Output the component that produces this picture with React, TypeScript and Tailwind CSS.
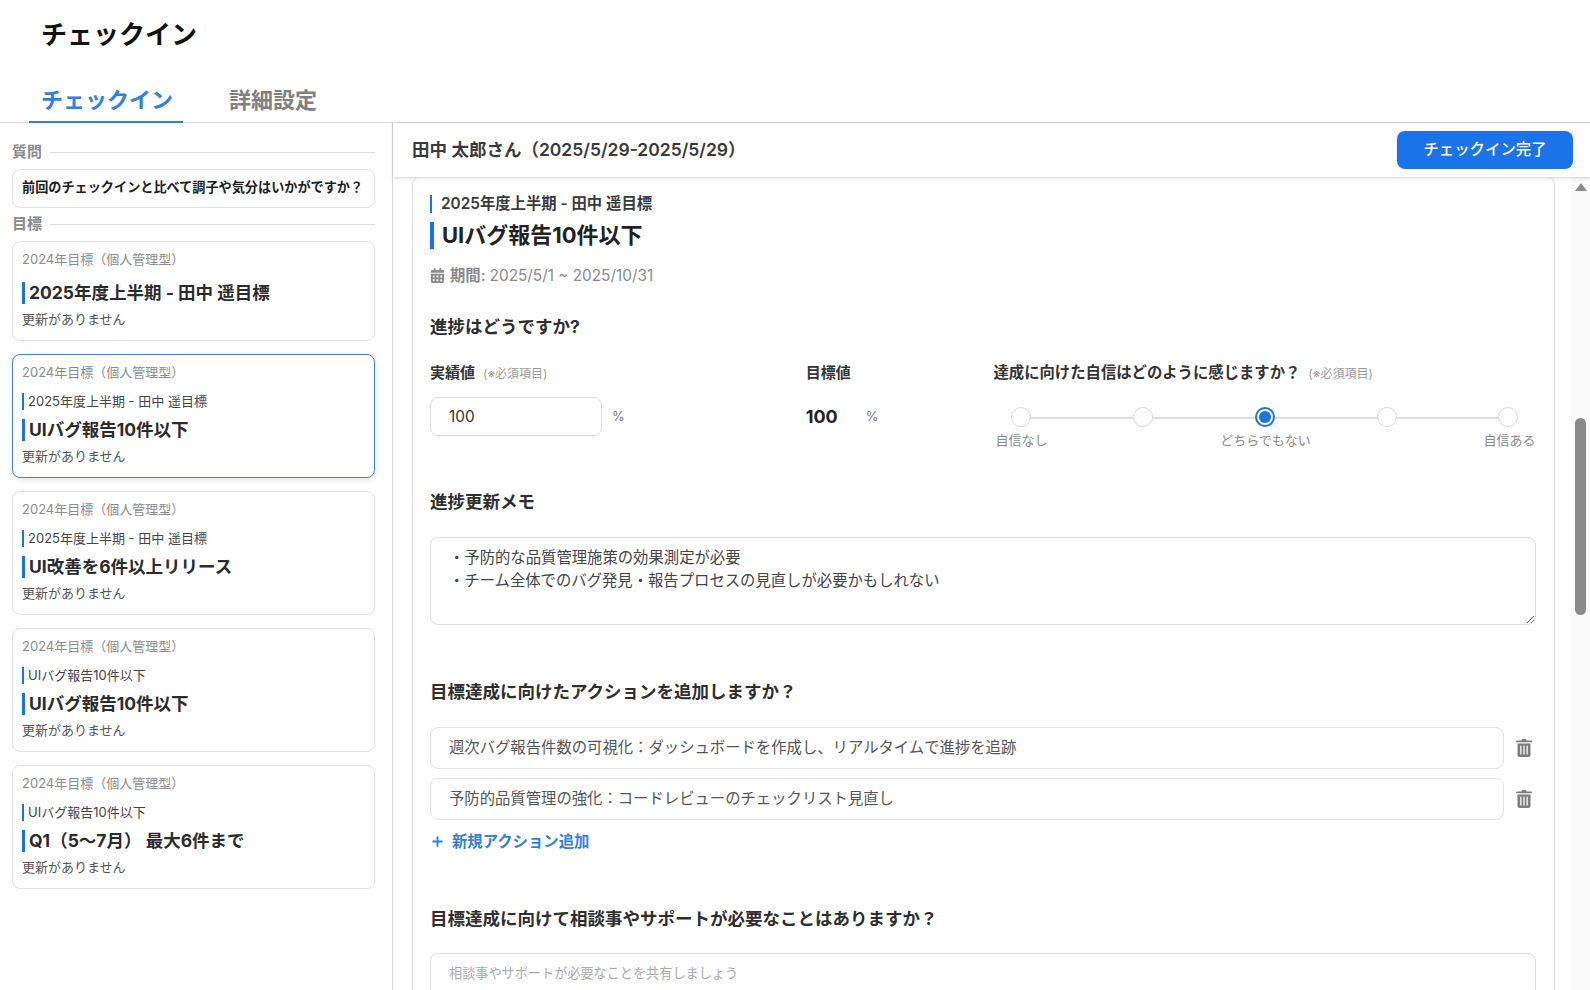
import { Plus } from 'lucide-react'
import { FaCalendarAlt } from 'react-icons/fa'

type Goal = {
  parent?: string
  title: string
  active?: boolean
  height: string
}

const goals: Goal[] = [
  { title: '2025年度上半期 - 田中 遥目標', height: 'h-[100px]' },
  { parent: '2025年度上半期 - 田中 遥目標', title: 'UIバグ報告10件以下', active: true, height: 'h-[124px]' },
  { parent: '2025年度上半期 - 田中 遥目標', title: 'UI改善を6件以上リリース', height: 'h-[124px]' },
  { parent: 'UIバグ報告10件以下', title: 'UIバグ報告10件以下', height: 'h-[124px]' },
  { parent: 'UIバグ報告10件以下', title: 'Q1（5〜7月） 最大6件まで', height: 'h-[124px]' },
]

function SideLabel({ children }: { children: string }) {
  return (
    <div className="flex h-[18px] items-center gap-2">
      <span className="text-[15px] font-semibold text-[#8a8a8a]">{children}</span>
      <div className="h-px flex-1 bg-[#dddddd]" />
    </div>
  )
}

function GoalCard({ goal }: { goal: Goal }) {
  const border = goal.active
    ? 'border-[#3b82e0] shadow-[0_2px_6px_rgba(0,0,0,0.1)]'
    : 'border-[#e2e2e2]'
  return (
    <div className={`${goal.height} rounded-lg border bg-white px-[9px] pt-[8px] ${border}`}>
      <div className="text-[13px] leading-[18px] text-[#8c8c8c]">2024年目標（個人管理型）</div>
      {goal.parent ? (
        <div className="mt-[12px] border-l-2 border-[#1a73e8] pl-[4px] text-[13px] leading-[17px] text-[#444444]">
          {goal.parent}
        </div>
      ) : null}
      <div className={`${goal.parent ? 'mt-[9px]' : 'mt-[14px]'} border-l-[3px] border-[#1a73e8] pl-[4px] text-[17.5px] leading-[22px] font-bold text-[#2b2b2b]`}>
        {goal.title}
      </div>
      <div className="mt-[6px] text-[13px] leading-[18px] text-[#555555]">更新がありません</div>
    </div>
  )
}

function Required() {
  return <span className="ml-2 text-[12px] font-normal text-[#9a9a9a]">(※必須項目)</span>
}

function SectionTitle({ children, className }: { children: string; className: string }) {
  return <h2 className={`text-[17.5px] leading-[24px] font-bold text-[#2e2e2e] ${className}`}>{children}</h2>
}

function TrashIcon() {
  return (
    <svg viewBox="0 0 16 18" className="ml-[12px] h-[18px] w-[16px] text-[#7d7d7d]" fill="currentColor">
      <path d="M5.5 1.5C5.5.7 6.2 0 7 0h2c.8 0 1.5.7 1.5 1.5H15c.6 0 1 .4 1 .9s-.4.9-1 .9H1c-.6 0-1-.4-1-.9s.4-.9 1-.9z" />
      <path d="M1.5 4.5h13V16c0 1.1-.9 2-2 2h-9c-1.1 0-2-.9-2-2z" />
      <rect x="4" y="6.5" width="1.6" height="9" rx=".6" fill="#e4e4e4" />
      <rect x="7.2" y="6.5" width="1.6" height="9" rx=".6" fill="#e4e4e4" />
      <rect x="10.4" y="6.5" width="1.6" height="9" rx=".6" fill="#e4e4e4" />
    </svg>
  )
}

function ConfidenceScale() {
  const points = [0, 1, 2, 3, 4]
  return (
    <div className="relative mt-[22px] ml-[18px] h-[20px] w-[507px] self-start">
      <div className="absolute top-[10px] right-[10px] left-[10px] h-[2px] bg-[#dedede]" />
      <div className="relative flex justify-between">
        {points.map((p) =>
          p === 2 ? (
            <div key={p} className="flex size-[20px] items-center justify-center rounded-full border-2 border-[#1a73e8] bg-white">
              <div className="size-[12px] rounded-full bg-[#1a73e8]" />
            </div>
          ) : (
            <div key={p} className="size-[20px] rounded-full border border-[#d9d9d9] bg-white" />
          ),
        )}
      </div>
    </div>
  )
}

function ActionRow({ text, className }: { text: string; className?: string }) {
  return (
    <div className={`flex items-center ${className ?? ''}`}>
      <div className="flex h-[42px] w-[1074px] items-center rounded-lg border border-[#e3e3e3] bg-white pl-[18px] text-[15.35px] text-[#555555]">
        {text}
      </div>
      <TrashIcon />
    </div>
  )
}

export default function App() {
  return (
    <div
      className="flex h-[990px] w-[1590px] flex-col overflow-hidden bg-white"
      style={{ fontFamily: 'Inter, "Noto Sans CJK JP", sans-serif' }}
    >
      <header className="h-[123px] shrink-0 border-b border-[#d9d9d9]">
        <h1 className="pt-[18px] pl-[41px] text-[26px] leading-[34px] font-bold text-[#111111]">チェックイン</h1>
        <div className="mt-[27px] flex pl-[29px]">
          <div className="h-[44px] w-[154px] border-b-2 border-[#2f7fe6] pl-[12px] text-[22px] leading-[42px] font-bold text-[#2f7fe6]">
            チェックイン
          </div>
          <div className="ml-[46px] text-[22px] leading-[42px] font-bold text-[#808080]">詳細設定</div>
        </div>
      </header>

      <div className="flex min-h-0 flex-1">
        <aside className="w-[393px] shrink-0 border-r border-[#d9d9d9] pt-[20px] pr-[17px] pl-[12px]">
          <SideLabel>質問</SideLabel>
          <div className="mt-[8px] flex h-[39px] items-center rounded-lg border border-[#e2e2e2] pb-[1px] pl-[9px] text-[13.15px] font-bold text-[#1c1c1c]">
            前回のチェックインと比べて調子や気分はいかがですか？
          </div>
          <div className="mt-[7px]">
            <SideLabel>目標</SideLabel>
          </div>
          <div className="mt-[8px] flex flex-col gap-[13px]">
            {goals.map((g, i) => (
              <GoalCard key={i} goal={g} />
            ))}
          </div>
        </aside>

        <main className="flex min-w-0 flex-1 flex-col">
          <div className="z-10 flex h-[54px] shrink-0 items-center justify-between pr-[17px] pl-[19px] shadow-[0_1px_3px_rgba(0,0,0,0.18)]">
            <div className="text-[17.5px] font-semibold text-[#3a3a3a]">田中 太郎さん（2025/5/29-2025/5/29）</div>
            <button className="h-[38px] w-[176px] rounded-lg bg-[#1a73e8] text-[15.4px] font-medium text-white">
              チェックイン完了
            </button>
          </div>

          <div className="flex min-h-0 flex-1">
            <div className="min-w-0 flex-1 pl-[19px]">
              <div className="h-[900px] w-[1143px] rounded-t-lg border-x border-[#dddddd] pt-[18px] pr-[17px] pl-[17px]">
                <div className="border-l-2 border-[#1a73e8] pl-[9px] text-[15.35px] leading-[18px] font-semibold text-[#3a3a3a]">
                  2025年度上半期 - 田中 遥目標
                </div>
                <div className="mt-[9px] border-l-4 border-[#1a73e8] pl-[8px] text-[22px] leading-[27px] font-bold text-[#222222]">
                  UIバグ報告10件以下
                </div>
                <div className="mt-[16px] flex h-[20px] items-center text-[15.35px] text-[#8a8a8a]">
                  <FaCalendarAlt className="mr-[5px] size-[15px]" />
                  <span className="font-semibold">期間:</span>
                  <span className="ml-1">2025/5/1 ~ 2025/10/31</span>
                </div>

                <SectionTitle className="mt-[30px]">進捗はどうですか?</SectionTitle>

                <div className="mt-[22px] flex">
                  <div className="w-[376px]">
                    <div className="h-[24px] text-[15px] leading-[24px] font-bold text-[#333333]">
                      実績値<Required />
                    </div>
                    <div className="mt-[12px] flex items-center">
                      <div className="flex h-[39px] w-[172px] items-center rounded-lg border border-[#dddddd] pl-[18px] text-[15.35px] text-[#333333]">
                        100
                      </div>
                      <span className="ml-[10px] text-[13px] text-[#777777]">%</span>
                    </div>
                  </div>
                  <div className="w-[188px]">
                    <div className="h-[24px] text-[15px] leading-[24px] font-bold text-[#333333]">目標値</div>
                    <div className="mt-[12px] flex h-[39px] items-center">
                      <span className="text-[18px] font-bold text-[#222222]">100</span>
                      <span className="ml-[28px] text-[13px] text-[#777777]">%</span>
                    </div>
                  </div>
                  <div className="flex w-[544px] flex-col">
                    <div className="h-[24px] text-[15.35px] leading-[24px] font-bold text-[#333333]">
                      達成に向けた自信はどのように感じますか？<Required />
                    </div>
                    <ConfidenceScale />
                    <div className="mt-[4px] ml-[2px] flex w-[540px] justify-between text-[13px] leading-[18px] text-[#8a8a8a]">
                      <span>自信なし</span>
                      <span>どちらでもない</span>
                      <span>自信ある</span>
                    </div>
                  </div>
                </div>

                <SectionTitle className="mt-[41px]">進捗更新メモ</SectionTitle>
                <textarea
                  readOnly
                  className="mt-[23px] block h-[88px] w-[1106px] rounded-lg border border-[#dddddd] px-[18px] pt-[8px] text-[15.35px] leading-[23px] text-[#444444] outline-none"
                  value={'・予防的な品質管理施策の効果測定が必要\n・チーム全体でのバグ発見・報告プロセスの見直しが必要かもしれない'}
                />

                <SectionTitle className="mt-[55px]">目標達成に向けたアクションを追加しますか？</SectionTitle>
                <ActionRow className="mt-[23px]" text="週次バグ報告件数の可視化：ダッシュボードを作成し、リアルタイムで進捗を追跡" />
                <ActionRow className="mt-[9px]" text="予防的品質管理の強化：コードレビューのチェックリスト見直し" />
                <div className="mt-[10px] flex h-[22px] items-center text-[15.35px] font-semibold text-[#2f7fe6]">
                  <Plus className="mr-[7px] size-[15px]" strokeWidth={3} />
                  新規アクション追加
                </div>

                <SectionTitle className="mt-[55px]">目標達成に向けて相談事やサポートが必要なことはありますか？</SectionTitle>
                <div className="mt-[22px] h-[80px] w-[1106px] rounded-lg border border-[#dddddd] pt-[10px] pl-[18px] text-[13.15px] text-[#aaaaaa]">
                  相談事やサポートが必要なことを共有しましょう
                </div>
              </div>
            </div>

            <div className="flex w-[19px] shrink-0 flex-col items-center bg-[#fafafa]">
              <div className="mt-[6px] h-0 w-0 border-x-[6px] border-b-[8px] border-x-transparent border-b-[#8a8a8a]" />
              <div className="mt-[227px] h-[197px] w-[11px] rounded-full bg-[#8a8a8a]" />
            </div>
          </div>
        </main>
      </div>
    </div>
  )
}
